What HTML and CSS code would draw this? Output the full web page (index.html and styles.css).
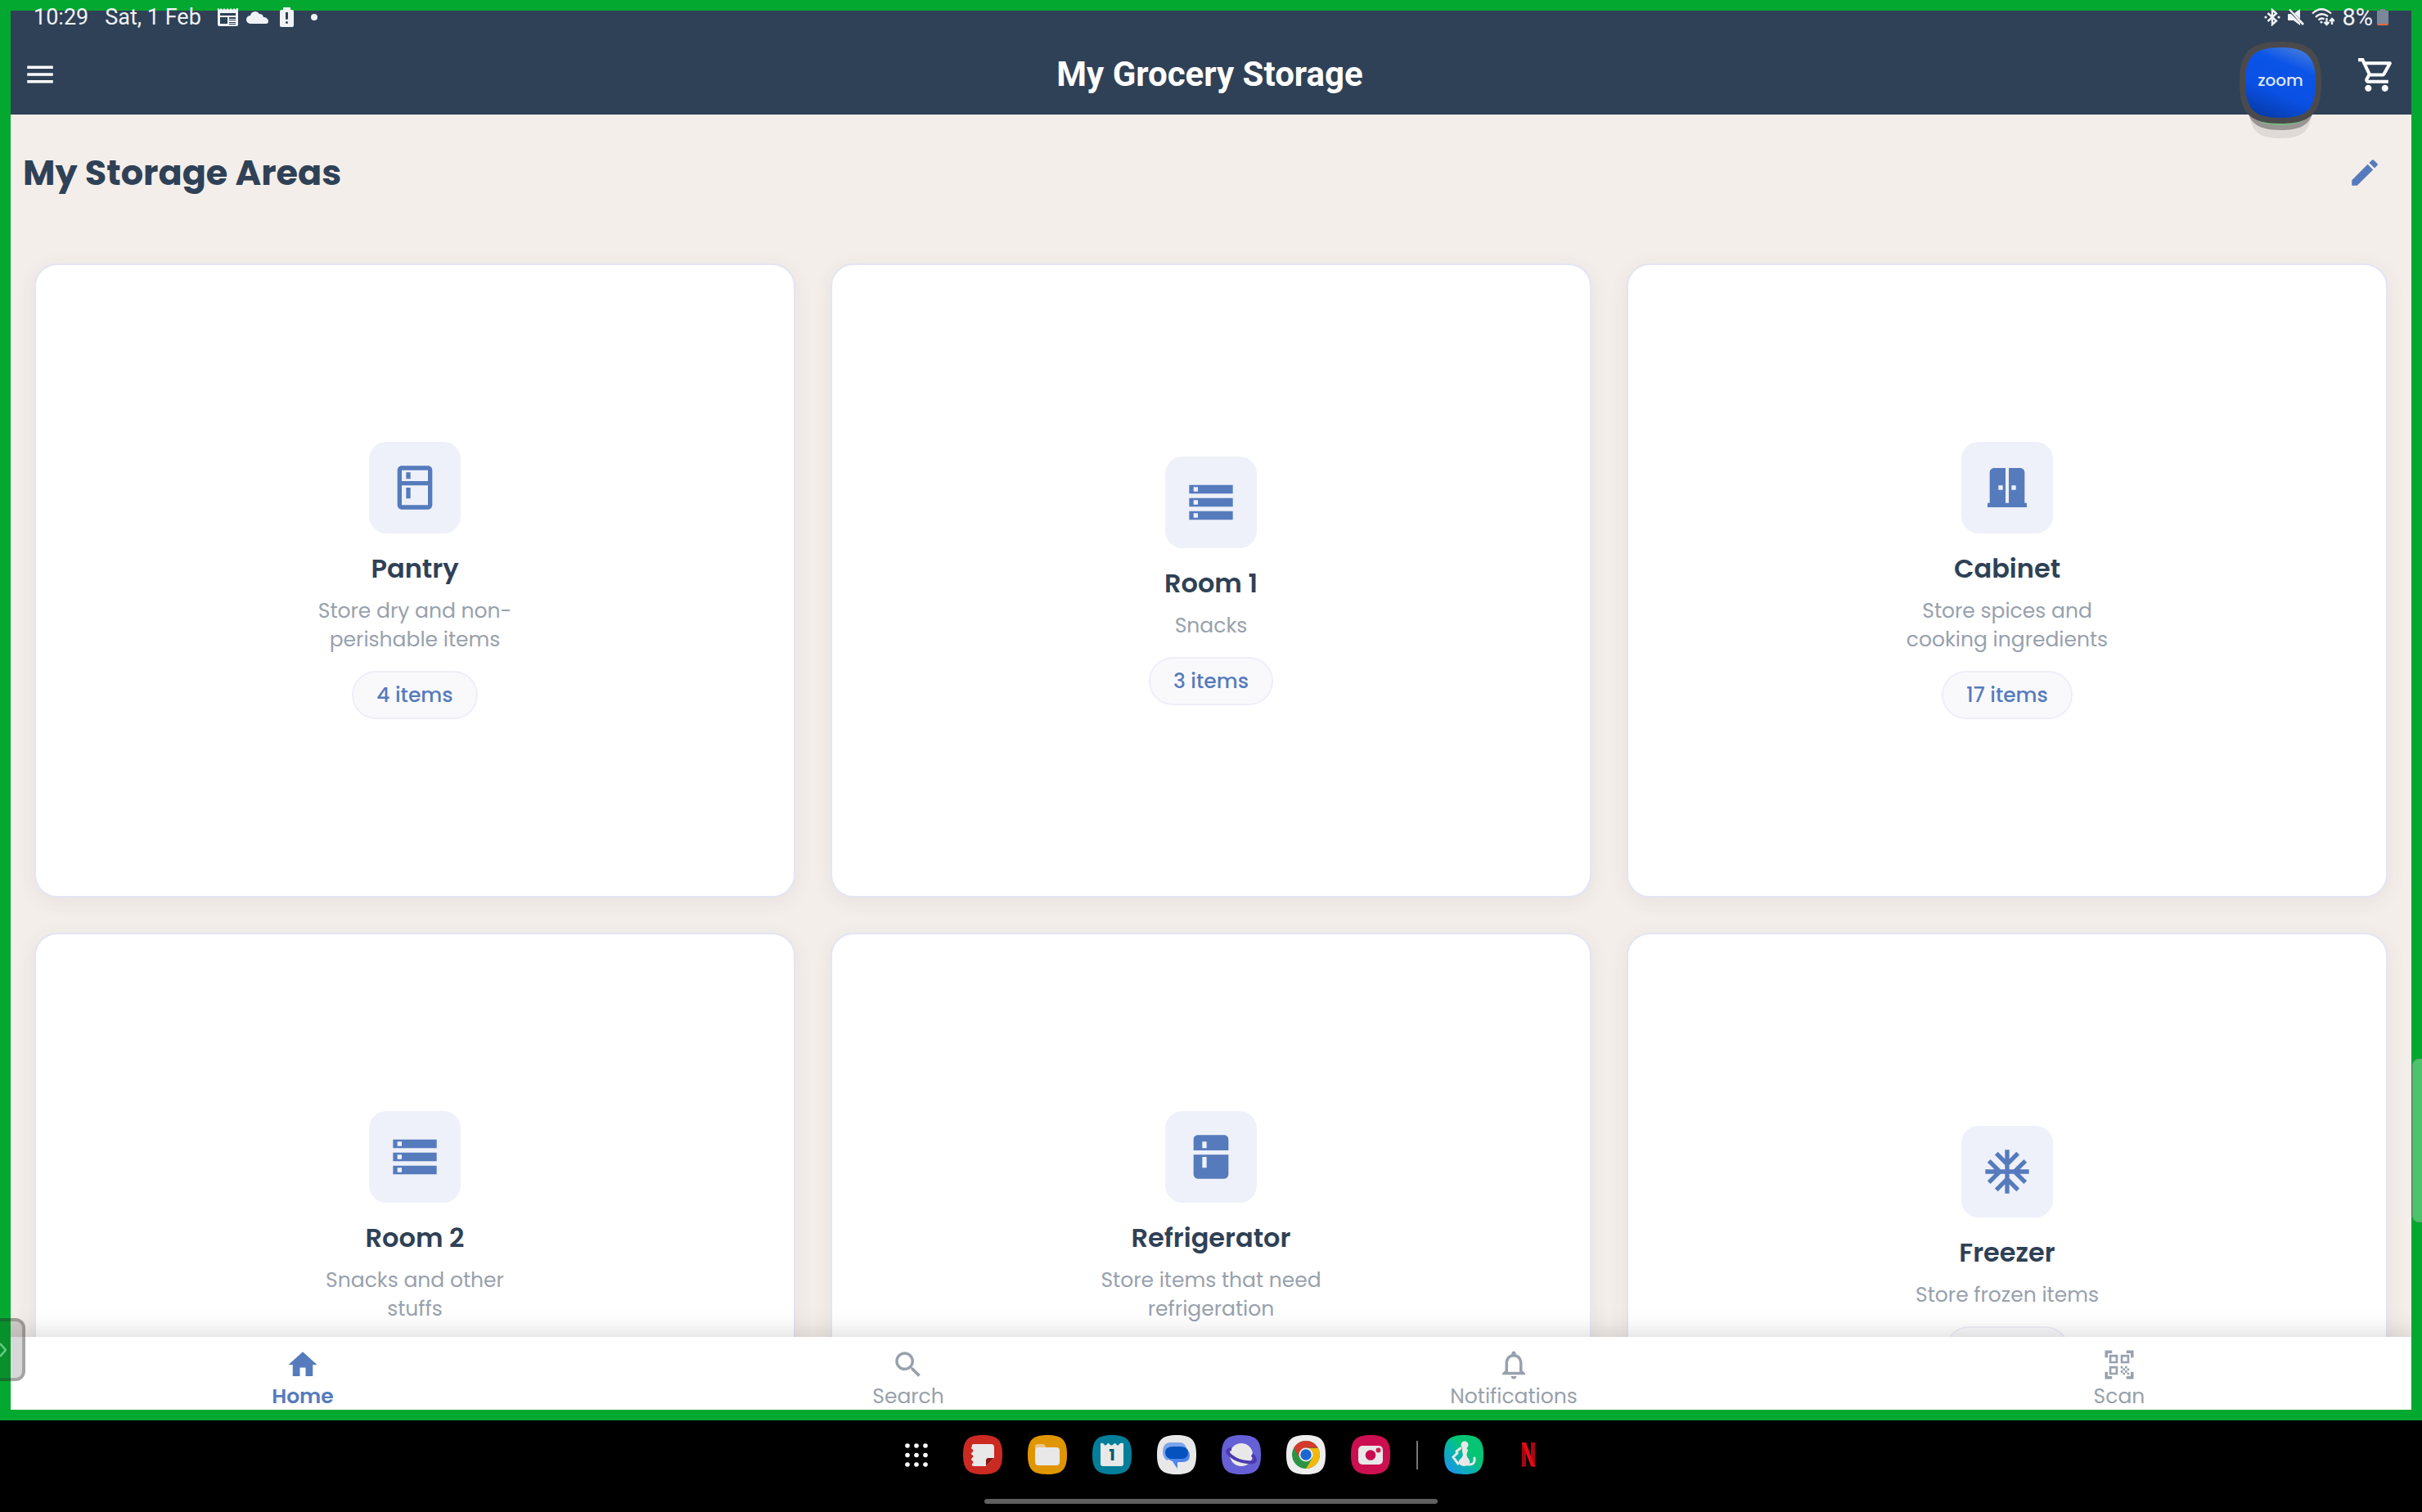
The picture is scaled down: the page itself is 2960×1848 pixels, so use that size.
FILE: index.html
```html
<!DOCTYPE html>
<html lang="en">
<head>
<meta charset="utf-8">
<meta name="viewport" content="width=device-width, initial-scale=1">
<title>My Grocery Storage</title>
<link rel="stylesheet" href="styles.css">
</head>
<body>
<svg class="defs" aria-hidden="true">
  <symbol id="i-storage" viewBox="0 0 24 24"><path d="M2 20h20v-4H2v4zm2-3h2v2H4v-2zM2 4v4h20V4H2zm4 3H4V5h2v2zm-4 7h20v-4H2v4zm2-3h2v2H4v-2z"/></symbol>
  <symbol id="squircle" viewBox="0 0 48 48"><path d="M24 0C42 0 48 6 48 24S42 48 24 48 0 42 0 24 6 0 24 0z"/></symbol>
</svg>
<div class="device">
  <div class="app">
    <header class="top">
      <div class="status">
        <span>10:29</span>
        <span class="date">Sat, 1 Feb</span>
        <svg class="s-news" viewBox="0 0 25 22"><path fill-rule="evenodd" d="M0 0h1l1 2 2-2 2 2 2-2 2 2 2-2 2 2 2-2 2 2 2-2 2 2 1-2h2v20a2 2 0 0 1-2 2H2a2 2 0 0 1-2-2zM3 6v3h19V6zM3 11v8h9v-8zM14 11v2h8v-2zm0 3v1h8v-1zm0 3v1h8v-1zm0 2v1h8v-1z"/></svg>
        <svg class="s-cloud" viewBox="0 0 27 15"><path d="M5 15a5 5 0 0 1 0-10A6 6 0 0 1 16 3a5 5 0 0 1 5 4c3 0 6 2 6 5 0 2-1 3-3 3z"/></svg>
        <svg class="s-alert" viewBox="0 0 17 24"><path fill-rule="evenodd" d="M4 0h9v3h2a2 2 0 0 1 2 2v17a2 2 0 0 1-2 2H2a2 2 0 0 1-2-2V5a2 2 0 0 1 2-2h2zM7 6v8q1.500 2 3 0V6zM8.500 17a1.500 1.500 0 1 0 .01 0z"/></svg>
        <span class="dot"></span>
        <div class="status-right">
          <svg class="s-sys" viewBox="0 0 20 22"><path d="M4.500 6l10.500 9.500-5 4.500V2l5 4.500L4.500 16" fill="none" stroke="#f0f3f6" stroke-width="2.400"/><circle cx="2" cy="11" r="1.600"/><circle cx="18" cy="11" r="1.600"/></svg>
          <svg class="s-sys" viewBox="0 0 20 22"><path d="M1 7h3L9 12l6 6v3l-8-6H1q-1 0-1-1V8q0-1 1-1zM8 6l7-5v12zM1 2l2-1 17 18-2 2z"/></svg>
          <svg class="s-wifi" viewBox="0 0 28 22"><g fill="none" stroke="#f0f3f6" stroke-width="2.300"><path d="M1 6.500Q12-4 24 6.500M5 11Q12 4 20 10M8.500 14.500Q12 11 15.500 13.500M18.500 12v8m-3-3 3 3 3-3M25 20v-7m-3 3 3-3 3 3"/></g><circle cx="12" cy="17" r="1.600"/></svg>
          <div class="battery"><span>8%</span>
          <svg class="s-batt" viewBox="0 0 14 20"><path fill="#7b8897" d="M4 0h6v2h4v16H0V2h4z"/><path fill="#f26a3d" d="M0 18h14q0 2-2 2H2q-2 0-2-2z"/></svg></div>
        </div>
      </div>
      <div class="appbar">
        <button class="icon-btn" aria-label="Menu"><svg class="i-md" viewBox="0 0 24 24"><path d="M3 18h18v-2H3v2zm0-5h18v-2H3v2zm0-7v2h18V6H3z"/></svg></button>
        <h1>My Grocery Storage</h1>
        <button class="icon-btn" aria-label="Shopping cart"><svg class="i-cart" viewBox="0 0 24 24"><path d="M15.550 13c.75 0 1.410-.41 1.750-1.030l3.580-6.490c.37-.66-.11-1.480-.87-1.480H5.210l-.94-2H1v2h2l3.600 7.590-1.350 2.440C4.520 15.370 5.480 17 7 17h12v-2H7l1.100-2h7.450zM6.160 6h12.150l-2.760 5H8.530L6.160 6zM7 18c-1.100 0-1.990.9-1.990 2S5.900 22 7 22s2-.9 2-2-.9-2-2-2zm10 0c-1.100 0-1.990.9-1.990 2s.89 2 1.990 2 2-.9 2-2-.9-2-2-2z"/></svg></button>
      </div>
    </header>

    <main>
      <div class="section-head">
        <h2>My Storage Areas</h2>
        <button class="icon-btn edit" aria-label="Edit storage areas"><svg class="i-md" viewBox="0 0 24 24"><path d="M3 17.250V21h3.750L17.810 9.940l-3.750-3.750L3 17.250zM20.710 7.040c.39-.39.39-1.020 0-1.410l-2.340-2.340c-.39-.39-1.020-.39-1.410 0l-1.830 1.830 3.750 3.750 1.830-1.830z"/></svg></button>
      </div>
      <div class="cards">
        <article class="card">
          <div class="tile"><svg viewBox="0 0 24 24"><path d="M18 2.010L6 2c-1.100 0-2 .89-2 2v16c0 1.100.9 2 2 2h12c1.100 0 2-.9 2-2V4c0-1.100-.9-1.990-2-1.990zM18 20H6v-9.020h12V20zm0-11H6V4h12v5zM8 5h2v3H8zm0 7h2v5H8z"/></svg></div>
          <h3>Pantry</h3><p>Store dry and non-<br>perishable items</p><span class="pill">4 items</span>
        </article>
        <article class="card">
          <div class="tile"><svg><use href="#i-storage"/></svg></div>
          <h3>Room 1</h3><p>Snacks</p><span class="pill">3 items</span>
        </article>
        <article class="card">
          <div class="tile"><svg viewBox="0 0 24 24"><path d="M20 19V5c0-1.100-.9-2-2-2h-5.250v16h-1.500V3H6c-1.100 0-2 .9-2 2v14H3v2h18v-2h-1zm-10-6H8v-2h2v2zm6 0h-2v-2h2v2z"/></svg></div>
          <h3>Cabinet</h3><p>Store spices and<br>cooking ingredients</p><span class="pill">17 items</span>
        </article>
        <article class="card">
          <div class="tile"><svg><use href="#i-storage"/></svg></div>
          <h3>Room 2</h3><p>Snacks and other<br>stuffs</p><span class="pill"></span>
        </article>
        <article class="card">
          <div class="tile"><svg viewBox="0 0 24 24"><path fill-rule="evenodd" d="M18 2H6c-1.100 0-2 .89-2 2v5h16V4c0-1.100-.9-2-2-2zM10 8H8V5h2zM4 11v9c0 1.100.9 2 2 2h12c1.100 0 2-.9 2-2v-9zm6 6H8v-5h2z"/></svg></div>
          <h3>Refrigerator</h3><p>Store items that need<br>refrigeration</p><span class="pill"></span>
        </article>
        <article class="card">
          <div class="tile"><svg viewBox="0 0 24 24"><path d="M22 11h-4.170l3.240-3.240-1.410-1.420L15 11h-2V9l4.660-4.660-1.420-1.410L13 6.170V2h-2v4.170L7.760 2.930 6.340 4.340 11 9v2H9L4.340 6.340 2.930 7.760 6.170 11H2v2h4.170l-3.240 3.240 1.410 1.420L9 13h2v2l-4.660 4.660 1.420 1.410L11 17.830V22h2v-4.170l3.240 3.240 1.420-1.410L13 15v-2h2l4.660 4.660 1.410-1.420L17.830 13H22v-2z"/></svg></div>
          <h3>Freezer</h3><p>Store frozen items</p><span class="pill"></span>
        </article>
      </div>
    </main>

    <nav class="tabs">
      <a class="active" href="#home"><svg class="i-md" viewBox="0 0 24 24"><path d="M10 20v-6h4v6h5v-8h3L12 3 2 12h3v8z"/></svg>Home</a>
      <a href="#search"><svg class="i-md" viewBox="0 0 24 24"><path d="M15.500 14h-.79l-.28-.27C15.410 12.590 16 11.110 16 9.500 16 5.910 13.090 3 9.500 3S3 5.910 3 9.500 5.910 16 9.500 16c1.610 0 3.090-.59 4.230-1.570l.27.28v.79l5 4.990L20.490 19l-4.990-5zm-6 0C7.010 14 5 11.990 5 9.500S7.010 5 9.500 5 14 7.010 14 9.500 11.990 14 9.500 14z"/></svg>Search</a>
      <a href="#notifications"><svg class="i-md" viewBox="0 0 24 24"><path d="M12 22c1.100 0 2-.9 2-2h-4c0 1.100.9 2 2 2zm6-6v-5c0-3.070-1.630-5.640-4.500-6.320V4c0-.83-.67-1.500-1.500-1.500s-1.500.67-1.500 1.500v.68C7.640 5.360 6 7.920 6 11v5l-2 2v1h16v-1l-2-2zm-2 1H8v-6c0-2.480 1.510-4.500 4-4.500s4 2.020 4 4.500v6z"/></svg>Notifications</a>
      <a href="#scan"><svg class="i-md" viewBox="0 0 24 24"><path d="M9.500 6.500v3h-3v-3h3M11 5H5v6h6V5zm-1.500 9.500v3h-3v-3h3M11 13H5v6h6v-6zm6.500-6.500v3h-3v-3h3M19 5h-6v6h6V5zm-6 8h1.500v1.500H13V13zm1.500 1.500H16V16h-1.500v-1.500zM16 13h1.500v1.500H16V13zm-3 3h1.500v1.500H13V16zm1.500 1.500H16V19h-1.500v-1.500zM16 16h1.500v1.500H16V16zm1.500-1.500H19V16h-1.500v-1.500zm0 3H19V19h-1.500v-1.500zM22 7h-2V4h-3V2h5v5zm0 15v-5h-2v3h-3v2h5zM2 22h5v-2H4v-3H2v5zM2 2v5h2V4h3V2H2z"/></svg>Scan</a>
    </nav>

    <button class="bubble" aria-label="Open Zoom">
      <svg viewBox="0 0 112 124" aria-hidden="true">
        <defs>
          <linearGradient id="zb" x1=".7" y1="0" x2=".3" y2="1"><stop offset="0" stop-color="#3f78dd"/><stop offset=".25" stop-color="#0b54e8"/><stop offset=".65" stop-color="#0a50e4"/><stop offset="1" stop-color="#063caa"/></linearGradient>
        </defs>
        <use href="#squircle" x="18" y="43" width="76" height="76" fill="#000" opacity=".08"/>
        <use href="#squircle" x="14" y="25" width="84" height="84" fill="#8d8a88" opacity=".85"/>
        <use href="#squircle" x="16" y="22" width="80" height="82" fill="#78b880"/>
        <use href="#squircle" x="6" y="1" width="100" height="100" fill="#4a4a4d"/>
        <use href="#squircle" x="13" y="8" width="86" height="86" fill="url(#zb)"/>
      </svg>
      <span>zoom</span>
    </button>
    <button class="edge-left" aria-label="Open panel"><svg viewBox="0 0 8 18"><path d="M0 1l7 8-7 8" fill="none" stroke="#66cc80" stroke-width="2.500"/></svg></button>
    <div class="edge-right"></div>
  </div>

  <footer class="taskbar">
    <div class="dock">
      <button class="all-apps" aria-label="All apps"><svg viewBox="0 0 48 48"><circle cx="13" cy="13" r="2.800"/><circle cx="24" cy="13" r="2.800"/><circle cx="35" cy="13" r="2.800"/><circle cx="13" cy="24.500" r="2.800"/><circle cx="24" cy="24.500" r="2.800"/><circle cx="35" cy="24.500" r="2.800"/><circle cx="13" cy="36" r="2.800"/><circle cx="24" cy="36" r="2.800"/><circle cx="35" cy="36" r="2.800"/></svg></button>
      <button aria-label="Notes"><svg viewBox="0 0 48 48"><use href="#squircle" fill="#cb2a22"/><path fill="#e8e8e8" d="M13 11h21q4 0 4 4v13l-10 10H13q-3 0-2-3 3-1 0-4-2-1 0-3 3-2 0-4-2-1 0-3 3-2 0-4-2-1 0-3-1-3 2-3z"/><path fill="#8e1414" d="M28 38v-7q0-3 3-3h7z"/></svg></button>
      <button aria-label="My Files"><svg viewBox="0 0 48 48"><use href="#squircle" fill="#e09600"/><path fill="#ecc583" d="M9 14q0-3 3-3h7q2 0 3 3l1 4H9z"/><rect x="9" y="15" width="30" height="22" rx="4" fill="#e8e8e8"/></svg></button>
      <button aria-label="Calendar"><svg viewBox="0 0 48 48"><use href="#squircle" fill="#047e9a"/><path fill="#e8e8e8" d="M10 10q3-1 4 1 2 3 4 0 1-2 3 0 2 3 5 0 2-2 3 0 2 3 4 0 1-2 5-1v25q0 3-3 3H13q-3 0-3-3z"/><text x="24" y="31" text-anchor="middle" class="cal-day">1</text></svg></button>
      <button aria-label="Messages"><svg viewBox="0 0 48 48"><use href="#squircle" fill="#e8e8e8"/><path fill="#7aa5ea" d="M17 9h10q8 0 9 8L12 31q-5-4-5-10 0-12 10-12z"/><path fill="#4d86ec" d="M19 16h11q10 0 10 9 0 8-9 8h-6v8q-4-5-6-9-7-2-7-8z"/><path fill="#0551bd" d="M20 14h8q10 0 10 7 0 8-8 8H19q-9 0-9-8 0-7 10-7z"/></svg></button>
      <button aria-label="Internet"><svg viewBox="0 0 48 48"><use href="#squircle" fill="#6560d6"/><circle cx="24" cy="24" r="14" fill="#e8e8e8"/><path d="M12 17Q3 18 11 25t20 8q11 1 10-3t-4-6" fill="none" stroke="#4b3aaf" stroke-width="4"/></svg></button>
      <button aria-label="Chrome"><svg viewBox="0 0 48 48"><use href="#squircle" fill="#eee"/><circle cx="24" cy="24" r="17" fill="#2a9344"/><path fill="#f2b90c" d="M24 16h15A17 17 0 0 1 24 41l8-13z"/><path fill="#d63a2c" d="M9.300 15.500a17 17 0 0 1 29.400 0H24l-8 12z"/><circle cx="24" cy="24" r="8.500" fill="#eee"/><circle cx="24" cy="24" r="6.700" fill="#1a67d2"/></svg></button>
      <button aria-label="Camera"><svg viewBox="0 0 48 48"><use href="#squircle" fill="#cc0f50"/><rect x="9" y="13" width="30" height="23" rx="5" fill="#e8e8e8"/><circle cx="24" cy="24.500" r="6.300" fill="#c90a4e"/><circle cx="33.500" cy="18.500" r="3" fill="#d32050"/></svg></button>
      <span class="sep"></span>
      <button aria-label="Health"><svg viewBox="0 0 48 48"><defs><linearGradient id="hg" x1="0" y1="1" x2=".8" y2=".2"><stop offset=".15" stop-color="#1d97e6"/><stop offset=".55" stop-color="#06b7a4"/><stop offset=".75" stop-color="#05c474"/></linearGradient></defs><use href="#squircle" fill="url(#hg)"/><g fill="#e8e8e8"><circle cx="25" cy="12" r="4.500"/><path d="M22 16h5q2 1 2 3-3 5 0 9 4 4 1 8-6 4-11 0-4-4 2-8 3-3 1-7z"/></g><path d="M20 16l-5 4M16 22l-5 5 6 8M29 36q9 1 8-8" fill="none" stroke="#e8e8e8" stroke-width="3" stroke-linecap="round"/></svg></button>
      <button aria-label="Netflix"><svg viewBox="0 0 48 48"><path fill="#a8070f" d="M16 9h5v29l-5 1zM27 9h5v30l-5-1z"/><path fill="#e30b16" d="M16 9h5l11 30-5-1z"/></svg></button>
    </div>
    <div class="handle"></div>
  </footer>
</div>
</body>
</html>
```
FILE: styles.css
```css
* { box-sizing: border-box; }
body, h1, h2, h3, p { margin: 0; }
body {
  background: #000;
  color: #2f4156;
  font-family: Poppins, Inter, sans-serif;
}
svg { display: block; fill: currentColor; flex: none; }
button { padding: 0; border: 0; background: none; color: inherit; font: inherit; cursor: pointer; }
.defs { position: absolute; width: 0; height: 0; }

.device { display: flex; flex-direction: column; height: 100vh; }
.app {
  position: relative;
  flex: 1;
  min-height: 0;
  display: flex;
  flex-direction: column;
  background: #f4eeea;
  overflow: hidden;
}
/* screen-sharing frame drawn over the app */
.app::after {
  content: "";
  position: absolute;
  inset: 0;
  border: 13px solid #02a82f;
  pointer-events: none;
  z-index: 2;
}

.top { background: #2f4156; color: #fff; font-family: Roboto, sans-serif; }
.status {
  position: relative;
  z-index: 3;
  display: flex;
  align-items: center;
  height: 42px;
  padding: 0 41px;
  color: #f0f3f6;
  font-size: 27px;
  line-height: 42px;
}
.date { margin: 0 20px; }
.s-news { width: 25px; height: 22px; margin-right: 10px; }
.s-cloud { width: 27px; height: 15px; margin-right: 14px; }
.s-alert { width: 17px; height: 24px; }
.dot { width: 8px; height: 8px; margin-left: 21px; border-radius: 50%; background: #f0f3f6; }
.status-right { display: flex; align-items: center; gap: 9px; margin-left: auto; }
.s-sys { width: 20px; height: 22px; }
.s-wifi { width: 28px; height: 22px; }
.battery { display: flex; align-items: center; gap: 5px; font-size: 29px; }
.s-batt { width: 14px; height: 20px; }

.appbar {
  display: grid;
  grid-template-columns: 1fr auto 1fr;
  align-items: center;
  height: 98px;
  padding: 0 31px 0 28px;
}
.appbar .icon-btn { justify-self: start; }
.appbar .icon-btn:last-child { justify-self: end; }
.appbar h1 { font-size: 42px; font-weight: 700; line-height: 50px; }
.i-md { width: 42px; height: 42px; }
.i-cart { width: 49px; height: 49px; }
.edit { color: #567bbd; }

main { flex: 1; min-height: 0; overflow: hidden; }
.section-head {
  display: flex;
  align-items: center;
  justify-content: space-between;
  height: 142px;
  padding: 0 49px 0 28px;
}
.section-head h2 { font-size: 43px; font-weight: 700; line-height: 60px; }
.cards {
  display: grid;
  grid-template-columns: repeat(3, 1fr);
  gap: 43px;
  padding: 40px 42px;
}
.card {
  display: flex;
  flex-direction: column;
  align-items: center;
  justify-content: center;
  aspect-ratio: 6 / 5;
  border: 2px solid #e3e5f3;
  border-radius: 28px;
  background: #fff;
  box-shadow: 0 5px 24px rgba(47, 65, 86, 0.07);
  text-align: center;
}
.tile {
  display: grid;
  place-items: center;
  width: 112px;
  height: 112px;
  border-radius: 21px;
  background: #eef1f9;
  color: #567bbd;
}
.tile svg { width: 64px; height: 64px; }
.card h3 { margin: 20px 0 12px; font-size: 32px; font-weight: 600; line-height: 45px; }
.card p { color: #98a1ad; font-size: 25px; line-height: 35px; }
.pill {
  min-width: 152px;
  min-height: 59px;
  margin-top: 21px;
  padding: 0 28px;
  border: 2px solid #eeeef9;
  border-radius: 30px;
  background: #f9f9fc;
  color: #567bbd;
  font-size: 25px;
  font-weight: 500;
  line-height: 55px;
}

.tabs {
  position: relative;
  display: grid;
  grid-template-columns: repeat(4, 1fr);
  height: 102px;
  padding-top: 13px;
  background: #fff;
  box-shadow: 0 0 32px rgba(0, 0, 0, 0.18);
}
.tabs a {
  display: flex;
  flex-direction: column;
  align-items: center;
  color: #98a1ad;
  font-size: 25px;
  line-height: 36px;
  text-decoration: none;
}
.tabs .active { color: #567bbd; font-weight: 600; }

.bubble { position: absolute; z-index: 3; top: 50px; right: 117px; width: 112px; height: 124px; }
.bubble svg { width: 112px; height: 124px; }
.bubble span {
  position: absolute;
  inset: 28px 0 auto;
  color: #dfe7fa;
  font-size: 20px;
  font-weight: 500;
  line-height: 40px;
}
.edge-left {
  position: absolute;
  z-index: 3;
  left: -4px;
  bottom: 48px;
  display: flex;
  align-items: center;
  width: 35px;
  height: 77px;
  border: 4px solid rgba(40, 40, 40, 0.42);
  border-radius: 0 12px 12px 0;
  background: rgba(40, 40, 40, 0.18) padding-box;
}
.edge-left svg { width: 8px; height: 18px; }
.edge-right {
  position: absolute;
  z-index: 3;
  right: -1px;
  bottom: 242px;
  width: 13px;
  height: 200px;
  border: 1px solid #6f9a78;
  border-radius: 8px 0 0 8px;
  background: #4cc36d;
}

.taskbar {
  display: flex;
  flex-direction: column;
  align-items: center;
  justify-content: space-between;
  height: 112px;
  padding: 18px 0 10px;
  background: #000;
}
.dock { display: flex; align-items: center; gap: 31px; padding-left: 28px; }
.dock svg { width: 48px; height: 48px; }
.all-apps { margin-right: 2px; color: #fff; }
.sep { width: 2px; height: 35px; margin: 0 1px; background: #777; }
.cal-day { fill: #035c72; font-size: 20px; font-weight: 700; }
.handle { width: 554px; height: 6px; border-radius: 3px; background: #606060; }
```
